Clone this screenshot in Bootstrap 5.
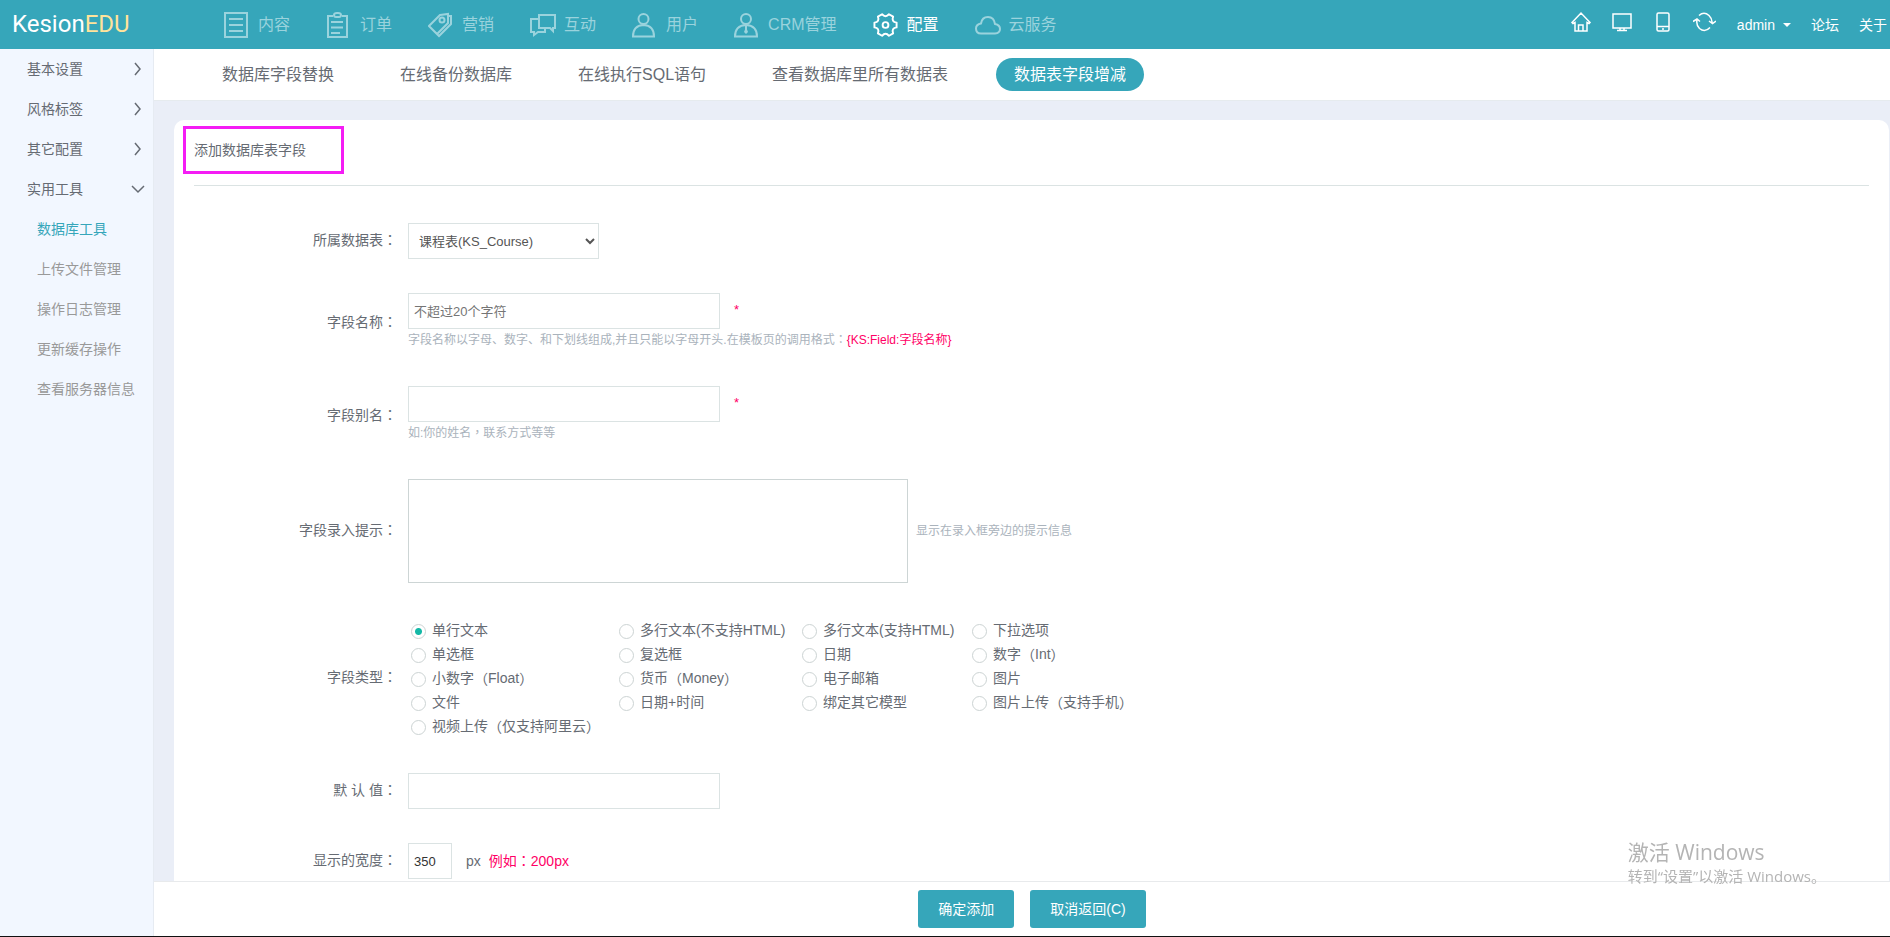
<!DOCTYPE html>
<html lang="zh-CN">
<head>
<meta charset="utf-8">
<meta name="viewport" content="width=device-width, initial-scale=1">
<title>KesionEDU</title>
<link href="https://cdn.jsdelivr.net/npm/bootstrap@5.3.0/dist/css/bootstrap.min.css" rel="stylesheet">
<style>
:root { --teal: #36a6ba; --line: #dbe3e3; --ink: #666b73; --hint: #aab3bc; --hot: #ff0066; }
body { font-family: "Liberation Sans", "Noto Sans CJK SC", sans-serif; font-size: 14px; line-height: 20px; color: var(--ink); background: #eaeef7; }
a { color: inherit; text-decoration: none; }
svg { fill: none; stroke: currentColor; stroke-width: 2; flex: none; display: block; }
.shell { height: 100vh; border-bottom: 1px solid #111; }
.topbar { height: 49px; background: var(--teal); color: #fff; }
.brand { width: 220px; font-size: 24px; line-height: 28px; padding-bottom: 2px; font-family: Roboto, "Liberation Sans", sans-serif; }
.brand span { color: #ffe39b; }
.mainnav { font-size: 16px; gap: 36px; color: #9ad3dd; }
.mainnav a { gap: 8px; }
.mainnav .current { color: #fff; }
.tools { gap: 19px; padding-bottom: 6px; margin-right: 21px; }
.tools svg { stroke-width: 1.5; }
.account { padding-right: 3px; }
.caret { border: 4px solid transparent; border-top-color: #fff; border-bottom: 0; margin-left: 8px; }
.side { width: 154px; background: #f2f7ff; border-right: 1px solid #e6ebf2; }
.side a { height: 40px; padding-bottom: 1px; }
.side .group { padding-right: 10px; padding-left: 27px; }
.side .leaf { padding-left: 37px; color: #999; }
.side .leaf.current { color: var(--teal); }
.side svg { stroke-width: 1.5; }
.tabs { height: 52px; background: #fff; border-bottom: 1px solid #e6ebee; padding-left: 50px; gap: 30px; font-size: 16px; }
.tabs a { padding: 7px 18px 6px; border-radius: 17px; }
.tabs .current { background: var(--teal); color: #fff; }
.panel { margin: 19px 1px 0 20px; background: #fff; border-radius: 10px 10px 0 0; padding: 6px 20px 0 9px; }
.panel h1 { font-size: 14px; line-height: 20px; border: 3px solid #f41df4; width: 161px; padding: 11px 8px; margin: 0 0 11px; }
.panel hr { margin: 0 0 37px 11px; border-color: var(--line); opacity: 1; }
.fields { gap: 34px; }
.tag { width: 214px; margin-right: 11px; text-align: right; padding-bottom: 2px; }
.punct { font-family: "Noto Sans CJK TC", sans-serif; line-height: 1; }
.box { display: block; height: 36px; border: 1px solid var(--line); padding: 0 5px; font-size: 13px; color: #333; background: #fff; border-radius: 0; width: 312px; }
.box::placeholder { color: #757575; }
select.box { width: 191px; padding: 0 6px; color: #555; }
.box.narrow { width: 44px; }
textarea.box { width: 500px; height: 104px; border-color: #cdd5d5; resize: none; }
.star { color: var(--hot); font-size: 13px; margin-left: 14px; padding-bottom: 2px; }
.hint { font-size: 12px; color: var(--hint); height: 23px; line-height: 22px; }
.hot { color: var(--hot); }
.unit { margin-left: 14px; }
.kinds { display: grid; grid-template-columns: 208px 183px 170px auto; margin: 1px 0; }
.kinds label { height: 24px; }
.kinds input { appearance: none; width: 15px; height: 15px; border: 1px solid #ccd3d3; border-radius: 50%; margin: 2px 6px 0 3px; }
.kinds input:checked { background: radial-gradient(circle, #14b8a6 3px, #fff 4px); }
.actions { height: 55px; background: #fff; border-top: 1px solid #e8eaec; gap: 16px; padding-left: 20px; }
.actions .btn { height: 38px; padding: 0 20px; font-size: 14px; border: 0; border-radius: 3px; background: var(--teal); color: #fff; }
.activation { position: fixed; right: 64px; bottom: 50px; color: #b4b4b4; font-family: "Open Sans", "Noto Sans CJK SC", sans-serif; font-size: 15px; line-height: 22px; pointer-events: none; }
.activation strong { display: block; font-weight: 400; font-size: 21px; line-height: 26px; }
</style>
</head>
<body>
<div class="shell d-flex flex-column overflow-hidden">
  <header class="topbar d-flex align-items-center flex-shrink-0 text-nowrap">
    <a class="brand ps-2 ms-1" href="#">Kesion<span>EDU</span></a>
    <nav class="mainnav d-flex">
      <a class="d-flex align-items-center" href="#"><svg width="26" height="26"><path d="M1 1h22v24H1zM5 7h14M5 13h14M5 19h14"/></svg>内容</a>
      <a class="d-flex align-items-center" href="#"><svg width="26" height="26"><path d="M7 4H2v21h19V4h-5M8 3q0-2 3-2h1q3 0 3 2t-2 2h-3q-2 0-2-2zM5 10h12M5 15.500h12M5 21h9"/></svg>订单</a>
      <a class="d-flex align-items-center" href="#"><svg width="26" height="26"><path d="M12 3l8-1v9L9 22l-8-8zM20 4l3 0v8L11 24l-3-3"/><circle cx="14" cy="8" r="2.500"/></svg>营销</a>
      <a class="d-flex align-items-center" href="#"><svg width="26" height="26"><path d="M9 3h16v13h-2v3l-3-3H9zM9 7H1v13h3v3l4-3h7v-4"/></svg>互动</a>
      <a class="d-flex align-items-center" href="#"><svg width="26" height="26"><circle cx="11.500" cy="7" r="5"/><path d="M1 24.500q0-11 10.500-11.500 10.500.5 10.500 11.500z"/></svg>用户</a>
      <a class="d-flex align-items-center" href="#"><svg width="26" height="26"><circle cx="12" cy="7" r="5"/><path d="M1 24.500q0-11 11-11.500 11 .5 11 11.500zM12 13v7"/><path d="M12 15l2 5-2 2-2-2z" fill="currentColor" stroke="none"/></svg>CRM管理</a>
      <a class="d-flex align-items-center current" href="#"><svg width="26" height="26" viewBox="-13 -13.500 27 27" stroke-linejoin="round"><path d="M11.500-2.500v5Q5.900 3.400 7.900 8.700L3.600 11.200Q0 6.800-3.600 11.200L-7.900 8.700Q-5.900 3.400-11.500 2.500v-5Q-5.900-3.400-7.900-8.700L-3.600-11.200Q0-6.800 3.600-11.200L7.900-8.700Q5.900-3.400 11.500-2.500z"/><circle r="3"/></svg>配置</a>
      <a class="d-flex align-items-center" href="#"><svg width="26" height="26"><path d="M6 21.500q-5 0-5-5 0-4 5-5Q7 5 13 5t7 7q5 1 5 5t-5 4.500z"/></svg>云服务</a>
    </nav>
    <div class="account ms-auto d-flex align-items-center">
      <div class="tools d-flex">
        <a href="#" aria-label="首页"><svg width="22" height="22"><path d="M2 11.500L11 2l9 9.500-1 1-2-1V20H5v-8.500l-2 1zM8.500 20v-6h4.500v6"/></svg></a>
        <a href="#" aria-label="电脑版"><svg width="22" height="22"><path d="M2 3h18v14H2zM6 19.500h10M9 17v3M13 17v3"/></svg></a>
        <a href="#" aria-label="手机版"><svg width="22" height="22"><rect x="5" y="2" width="12" height="18" rx="1.500"/><path d="M5 15.500h12M10 18h2"/></svg></a>
        <a href="#" aria-label="刷新"><svg width="23" height="22"><path d="M6 4.500Q11 0 16 4.500 19.500 8 19 12M16 10l3.500 2.500L23 10M17 16.500Q12 22 6.500 17.500 3 14 4 9M0 10.500L4 8l3 2.500"/></svg></a>
      </div>
      <a class="d-flex align-items-center" href="#">admin<span class="caret"></span></a>
      <a class="ms-3 ps-1" href="#">论坛</a>
      <a class="ms-3 ps-1" href="#">关于</a>
    </div>
  </header>
  <div class="d-flex flex-grow-1 overflow-hidden">
    <nav class="side flex-shrink-0 text-nowrap">
      <a class="group d-flex align-items-center justify-content-between" href="#">基本设置<svg width="10" height="14"><path d="M2 1l5 6-5 6"/></svg></a>
      <a class="group d-flex align-items-center justify-content-between" href="#">风格标签<svg width="10" height="14"><path d="M2 1l5 6-5 6"/></svg></a>
      <a class="group d-flex align-items-center justify-content-between" href="#">其它配置<svg width="10" height="14"><path d="M2 1l5 6-5 6"/></svg></a>
      <a class="group d-flex align-items-center justify-content-between pe-2" href="#">实用工具<svg width="14" height="10"><path d="M1 2l6 6 6-6"/></svg></a>
      <a class="leaf d-flex align-items-center current" href="#">数据库工具</a>
      <a class="leaf d-flex align-items-center" href="#">上传文件管理</a>
      <a class="leaf d-flex align-items-center" href="#">操作日志管理</a>
      <a class="leaf d-flex align-items-center" href="#">更新缓存操作</a>
      <a class="leaf d-flex align-items-center" href="#">查看服务器信息</a>
    </nav>
    <div class="d-flex flex-column flex-grow-1 overflow-hidden">
      <nav class="tabs d-flex align-items-center flex-shrink-0 text-nowrap">
        <a href="#">数据库字段替换</a>
        <a href="#">在线备份数据库</a>
        <a href="#">在线执行SQL语句</a>
        <a href="#">查看数据库里所有数据表</a>
        <a class="current" href="#">数据表字段增减</a>
      </nav>
      <main class="panel flex-grow-1 overflow-hidden">
        <h1 class="fw-normal">添加数据库表字段</h1>
        <hr>
        <form id="fieldForm" class="fields d-flex flex-column">
          <div class="d-flex align-items-center">
            <label class="tag" for="tbl">所属数据表<span class="punct" lang="zh-TW">：</span></label>
            <select class="box" id="tbl"><option>课程表(KS_Course)</option></select>
          </div>
          <div class="d-flex align-items-center">
            <label class="tag" for="fname">字段名称<span class="punct" lang="zh-TW">：</span></label>
            <div>
              <div class="d-flex align-items-center"><input class="box" id="fname" type="text" placeholder="不超过20个字符"><span class="star">*</span></div>
              <div class="hint">字段名称以字母、数字、和下划线组成,并且只能以字母开头.在模板页的调用格式<span class="punct" lang="zh-TW">：</span><span class="hot">{KS:Field:字段名称}</span></div>
            </div>
          </div>
          <div class="d-flex align-items-center">
            <label class="tag" for="falias">字段别名<span class="punct" lang="zh-TW">：</span></label>
            <div>
              <div class="d-flex align-items-center"><input class="box" id="falias" type="text"><span class="star">*</span></div>
              <div class="hint">如:你的姓名<span class="punct" lang="zh-TW">，</span>联系方式等等</div>
            </div>
          </div>
          <div class="d-flex align-items-center">
            <label class="tag" for="ftip">字段录入提示<span class="punct" lang="zh-TW">：</span></label>
            <textarea class="box" id="ftip"></textarea>
            <span class="hint ms-2 ps-0">显示在录入框旁边的提示信息</span>
          </div>
          <div class="d-flex align-items-center" role="radiogroup" aria-labelledby="kindTag">
            <span class="tag" id="kindTag">字段类型<span class="punct" lang="zh-TW">：</span></span>
            <div class="kinds">
              <label class="d-flex align-items-center"><input type="radio" name="kind" checked>单行文本</label>
              <label class="d-flex align-items-center"><input type="radio" name="kind">多行文本(不支持HTML)</label>
              <label class="d-flex align-items-center"><input type="radio" name="kind">多行文本(支持HTML)</label>
              <label class="d-flex align-items-center"><input type="radio" name="kind">下拉选项</label>
              <label class="d-flex align-items-center"><input type="radio" name="kind">单选框</label>
              <label class="d-flex align-items-center"><input type="radio" name="kind">复选框</label>
              <label class="d-flex align-items-center"><input type="radio" name="kind">日期</label>
              <label class="d-flex align-items-center"><input type="radio" name="kind">数字<span class="punct" lang="zh-TW">（</span>Int<span class="punct" lang="zh-TW">）</span></label>
              <label class="d-flex align-items-center"><input type="radio" name="kind">小数字<span class="punct" lang="zh-TW">（</span>Float<span class="punct" lang="zh-TW">）</span></label>
              <label class="d-flex align-items-center"><input type="radio" name="kind">货币<span class="punct" lang="zh-TW">（</span>Money<span class="punct" lang="zh-TW">）</span></label>
              <label class="d-flex align-items-center"><input type="radio" name="kind">电子邮箱</label>
              <label class="d-flex align-items-center"><input type="radio" name="kind">图片</label>
              <label class="d-flex align-items-center"><input type="radio" name="kind">文件</label>
              <label class="d-flex align-items-center"><input type="radio" name="kind">日期+时间</label>
              <label class="d-flex align-items-center"><input type="radio" name="kind">绑定其它模型</label>
              <label class="d-flex align-items-center"><input type="radio" name="kind">图片上传<span class="punct" lang="zh-TW">（</span>支持手机<span class="punct" lang="zh-TW">）</span></label>
              <label class="d-flex align-items-center"><input type="radio" name="kind">视频上传<span class="punct" lang="zh-TW">（</span>仅支持阿里云<span class="punct" lang="zh-TW">）</span></label>
            </div>
          </div>
          <div class="d-flex align-items-center">
            <label class="tag" for="fdef">默 认 值<span class="punct" lang="zh-TW">：</span></label>
            <input class="box" id="fdef" type="text">
          </div>
          <div class="d-flex align-items-center">
            <label class="tag" for="fwidth">显示的宽度<span class="punct" lang="zh-TW">：</span></label>
            <input class="box narrow" id="fwidth" type="text" value="350">
            <span class="unit">px</span><span class="hot ms-2">例如<span class="punct" lang="zh-TW">：</span>200px</span>
          </div>
        </form>
      </main>
      <footer class="actions d-flex align-items-center justify-content-center flex-shrink-0">
        <button class="btn" type="submit" form="fieldForm">确定添加</button>
        <button class="btn" type="button">取消返回(C)</button>
      </footer>
    </div>
  </div>
</div>
<div class="activation"><strong>激活 Windows</strong>转到“设置”以激活 Windows。</div>
<script src="https://cdn.jsdelivr.net/npm/bootstrap@5.3.0/dist/js/bootstrap.bundle.min.js"></script>
</body>
</html>
